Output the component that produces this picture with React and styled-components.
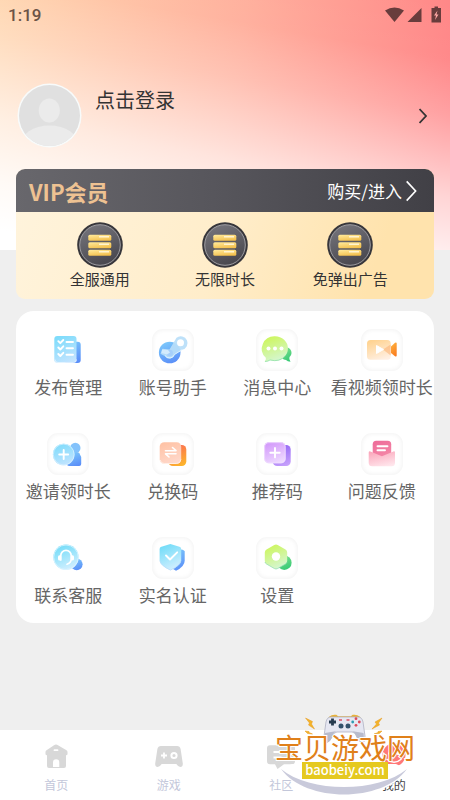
import React, { useState } from "react";
import styled, { createGlobalStyle } from "styled-components";

const GlobalStyle = createGlobalStyle`
  * {
    box-sizing: border-box;
  }

  body {
    margin: 0;
    font-family: "Noto Sans CJK SC", "Noto Sans", sans-serif;
    color: #333;
    background-color: #efefef;
  }

  button {
    padding: 0;
    border: none;
    background: none;
    font: inherit;
    color: inherit;
    cursor: pointer;
  }
`;

const Page = styled.div`
  display: flex;
  flex-direction: column;
  min-height: 100vh;
  background:
    linear-gradient(190deg, rgba(255, 255, 255, 0) 0%, rgba(255, 255, 255, 0.03) 18%, rgba(255, 255, 255, 0.24) 35%, rgba(255, 255, 255, 0.66) 60%, rgba(255, 255, 255, 0.9) 80%, #fff 94%),
    linear-gradient(100deg, #ffd4ac 0%, #ffaf9c 50%, #ff8486 95%);
  background-size: 100% 250px;
  background-repeat: no-repeat;
  background-color: #efefef;
`;

const StatusBar = styled.div`
  display: flex;
  align-items: center;
  justify-content: space-between;
  height: 30px;
  padding: 0 8px;
  font-family: Roboto, sans-serif;
  font-size: 17px;
  font-weight: 500;
  color: #6b5347;
`;

const StatusIcons = styled.svg`
  width: 57px;
  height: 18px;
  fill: #683c3c;
`;

const Profile = styled.button`
  display: flex;
  align-items: center;
  margin: 53px 23px 0 17px;
  text-align: left;
`;

const Avatar = styled.svg`
  width: 65px;
  height: 65px;
`;

const LoginText = styled.span`
  flex: 1;
  align-self: flex-start;
  margin-left: 13px;
  font-size: 20px;
  line-height: 34px;
`;

const Chevron = styled.svg`
  width: ${(props) => props.$size / 2}px;
  height: ${(props) => props.$size}px;
  fill: none;
  stroke: currentColor;
  stroke-width: ${(props) => (props.$size > 16 ? 1.2 : 1.8)};
`;

const VipCard = styled.section`
  margin: 21px 16px 0;
  border-radius: 9px;
  overflow: hidden;
  background: linear-gradient(110deg, #fff4dd 0%, #ffedca 50%, #ffe3ad 85%);
`;

const VipHeader = styled.div`
  display: flex;
  align-items: center;
  justify-content: space-between;
  height: 43px;
  padding: 0 17px 0 13px;
  background: linear-gradient(to right, #68676c, #56555b 50%, #414046);
`;

const VipTitle = styled.h2`
  margin: 0;
  font-size: 22px;
  font-weight: 700;
  color: #eec292;
`;

const BuyButton = styled.button`
  display: flex;
  align-items: center;
  gap: 4px;
  font-size: 17px;
  color: #fff;
`;

const Benefits = styled.div`
  display: grid;
  grid-template-columns: repeat(3, 1fr);
  height: 87px;
  padding: 10px 21px 0;
`;

const Benefit = styled.div`
  display: flex;
  flex-direction: column;
  align-items: center;
  font-size: 15px;
  line-height: 22px;
`;

const Medal = styled.svg`
  width: 46px;
  height: 46px;
`;

const MenuCard = styled.nav`
  display: grid;
  grid-template-columns: repeat(4, 1fr);
  margin: 12px 16px 16px;
  border-radius: 18px;
  background-color: #fff;
`;

const MenuItem = styled.button`
  display: flex;
  flex-direction: column;
  align-items: center;
  gap: 4px;
  height: 104px;
  padding-top: 18px;
  font-size: 17px;
  line-height: 24px;
  white-space: nowrap;
  color: #666;
`;

const IconTile = styled.span`
  display: block;
  height: 42px;
  border-radius: 11px;
  box-shadow: ${(props) =>
    props.$plain ? "none" : "inset 0 0 4px 1px #f3f3f3"};
`;

const TileSvg = styled.svg`
  display: block;
  width: 42px;
  height: 42px;
`;

const TabBar = styled.nav`
  position: relative;
  display: grid;
  grid-template-columns: repeat(4, 1fr);
  height: 70px;
  margin-top: auto;
  background-color: #fff;
`;

const Tab = styled.button`
  display: flex;
  flex-direction: column;
  align-items: center;
  gap: 6px;
  padding-top: 12px;
  font-size: 12px;
  line-height: 18px;
  color: ${(props) => (props.$active ? "#444" : "#c3c7da")};
`;

const TabSvg = styled.svg`
  width: 28px;
  height: 28px;
  color: ${(props) => (props.$active ? "#ff7878" : "#d8d8d8")};
  fill: currentColor;
`;

// 右下角站点标识,浮在底部导航之上
const SiteMark = styled.div`
  position: absolute;
  right: 30px;
  bottom: 0;
  width: 150px;
  height: 96px;
  padding-top: 29px;
  display: flex;
  flex-direction: column;
  align-items: center;
  pointer-events: none;
`;

const SiteArt = styled.svg`
  position: absolute;
  inset: 0;
  width: 100%;
  height: 100%;
`;

const SiteName = styled.div`
  position: relative;
  font-size: 28px;
  line-height: 28px;
  white-space: nowrap;
  color: #e0801a;
  -webkit-text-stroke: 2px #fff;
  paint-order: stroke fill;
`;

const SiteDomain = styled.div`
  position: relative;
  width: 86px;
  height: 17px;
  margin-top: 1px;
  text-align: center;
  font-size: 13px;
  font-weight: 500;
  line-height: 15px;
  color: #fff;
  background-color: #e5c91f;
`;

function Gradients() {
  const list = [
    ["sky", "#7fdcfb", "#c4e4ff"],
    ["blue", "#7cc8fb", "#5a8ef8"],
    ["cyan", "#72dcf8", "#d6f0ff"],
    ["lime", "#cdf65c", "#d5f6d8"],
    ["green", "#7fe08c", "#35c975"],
    ["peach", "#ffd391", "#fff0e4"],
    ["orange", "#ffb03b", "#f97b20"],
    ["coral", "#ffc3a6", "#ffd9cc"],
    ["fire", "#fb6a53", "#fdb52c"],
    ["lilac", "#d39afb", "#efdcff"],
    ["violet", "#8f62f5", "#c6a0fb"],
    ["rose", "#ee6d9a", "#f58aa8"],
    ["blush", "#fba9bd", "#ffe6ec"],
    ["gold", "#ffe795", "#f2bd48"],
    ["medal", "#74737a", "#46454c"],
  ];
  return (
    <svg width="0" height="0" style={{ position: "absolute" }} aria-hidden="true">
      <defs>
        {list.map(([id, from, to]) => (
          <linearGradient id={id} key={id} x1="0.3" y1="0" x2="0.7" y2="1">
            <stop offset="0" stopColor={from} />
            <stop offset="1" stopColor={to} />
          </linearGradient>
        ))}
      </defs>
    </svg>
  );
}

const white = {
  fill: "none",
  stroke: "#fff",
  strokeWidth: 1.9,
  strokeLinecap: "round",
  strokeLinejoin: "round",
};

const menuItems = [
  {
    label: "发布管理",
    plain: true,
    icon: (
      <>
        <rect x="17" y="12.7" width="16.7" height="21.3" rx="3" fill="url(#blue)" />
        <rect x="7.3" y="7" width="22.2" height="26.7" rx="3" fill="url(#sky)" />
        <path d="M8 30.500q0 3 3 3h15.500q3 0 3-3" fill="none" stroke="#e8f5ff" strokeWidth="0.8" />
        <path
          d="M11.300 12.200l2 2 3-3.200M11.300 18.500l2 2 3-3.200M11.300 25l2 2 3-3.200M19.500 13h6.500M19.500 19.300h6.500M19.500 25.700h6.500"
          {...white}
        />
      </>
    ),
  },
  {
    label: "账号助手",
    icon: (
      <>
        <circle cx="17.700" cy="23.500" r="10.800" fill="url(#blue)" />
        <path
          d="M24.500 8.800a6.800 6.800 0 1 1 5.500 12L22.500 25.500a5.300 5.300 0 0 1-9.500 1.800l-4.500-2.500 2-5 7 .8z"
          fill="#b9def9"
          opacity="0.92"
        />
        <path d="M13 26.500a5.300 5.300 0 0 0 9.500-1l7.500-4.700" fill="none" stroke="#e9f7ff" strokeWidth="0.900" />
        <circle cx="17.700" cy="24" r="3.200" fill="#a5cffb" />
        <path d="M10 20.500l6 .5 2 2.500-3 2-5.500-1.500z" fill="#d3ebfd" />
        <circle cx="28.500" cy="13.700" r="3.500" fill="#fff" />
      </>
    ),
  },
  {
    label: "消息中心",
    icon: (
      <>
        <path d="M24.500 24a5.500 5.500 0 1 1 9 4q-.8 2 1 4.800-3-.3-4.500-1.800-5-.5-5.500-7z" fill="url(#green)" />
        <path
          d="M19 7.300a12.700 12 0 0 1 0 24.400q-3 0-5-.7-2.500 1.500-5.500 1.500 2-2 1.300-3.800a12.700 12.400 0 0 1 9.200-21.400z"
          fill="url(#lime)"
        />
        <path d="M9 32.500q3 0 5-1.500 10 2.500 15.500-4.500" fill="none" stroke="#7fdc9b" strokeWidth="0.700" />
        <circle cx="12.500" cy="19.500" r="2" fill="#fff" />
        <circle cx="19" cy="19.500" r="2" fill="#fff" />
        <circle cx="25.500" cy="19.500" r="2" fill="#fff" />
      </>
    ),
  },
  {
    label: "看视频领时长",
    icon: (
      <>
        <path d="M30 17.500l4-3.700q1.700-.8 1.700.8v11.800q0 1.600-1.700.8l-4-3.200z" fill="url(#orange)" />
        <rect x="6" y="11" width="23.700" height="19.700" rx="3.500" fill="url(#peach)" />
        <path d="M22 20.500l7.700-5v11z" fill="#fbaa66" opacity="0.500" />
        <path d="M15.500 16.500l7 4-7 4z" fill="#fff" stroke="#fff" strokeLinejoin="round" />
      </>
    ),
  },
  {
    label: "邀请领时长",
    icon: (
      <>
        <circle cx="28.300" cy="15" r="5.200" fill="#83c2fb" />
        <path d="M21 19.500h10.500q1.200 0 1.200 1.500l1.500 3v7q0 2-2 2H22q-2 0-2-2z" fill="url(#blue)" />
        <circle cx="16.700" cy="21.500" r="10.800" fill="url(#sky)" />
        <circle cx="16.700" cy="21.500" r="10.400" fill="none" stroke="#d7f0ff" strokeWidth="0.800" />
        <path d="M16.700 17v9M12.200 21.500h9" {...white} />
      </>
    ),
  },
  {
    label: "兑换码",
    icon: (
      <>
        <rect x="16.300" y="12" width="18" height="21" rx="4.500" fill="url(#fire)" />
        <rect x="7.700" y="9.300" width="21.500" height="21.500" rx="4.500" fill="url(#coral)" />
        <path d="M8.200 27q.5 3.500 4 3.500h12.500q3.800 0 4.200-4" fill="none" stroke="#fff0ea" strokeWidth="0.900" />
        <path d="M13.500 17.700h10.500l-3.500-3.200M24 20.800H13.500l3.500 3.200" {...white} strokeWidth={1.600} />
      </>
    ),
  },
  {
    label: "推荐码",
    icon: (
      <>
        <rect x="16.700" y="12" width="18" height="21" rx="4.500" fill="url(#violet)" />
        <rect x="8.300" y="9.300" width="21.300" height="21" rx="4.500" fill="url(#lilac)" />
        <rect x="8.700" y="9.700" width="20.500" height="20.200" rx="4.200" fill="none" stroke="#f1e0ff" strokeWidth="0.700" />
        <path d="M19 15v9.400M14.300 19.700h9.400" {...white} />
      </>
    ),
  },
  {
    label: "问题反馈",
    icon: (
      <>
        <rect x="11.700" y="7.700" width="18.500" height="18" rx="3.500" fill="url(#rose)" />
        <path d="M7.700 19.500q0-1.500 1.700-1.100l11.500 4.800 11.500-4.800q1.600-.4 1.600 1.100v10.300q0 3.500-3.500 3.500H11.200q-3.500 0-3.500-3.500z" fill="url(#blush)" />
        <path d="M16.500 13.300h10M16.500 17.300h7.500" {...white} />
      </>
    ),
  },
  {
    label: "联系客服",
    plain: true,
    icon: (
      <>
        <circle cx="29.700" cy="27.300" r="5.900" fill="url(#blue)" />
        <circle cx="19" cy="20.300" r="12.700" fill="url(#cyan)" />
        <circle cx="19" cy="20.300" r="12.300" fill="none" stroke="#ddf4ff" strokeWidth="0.800" />
        <path d="M13.800 23v-4.500a5.200 5.200 0 0 1 10.400 0V22q0 4-4.200 5.200" {...white} strokeWidth={1.700} />
        <rect x="11" y="18.200" width="3.200" height="5.300" rx="1.500" fill="#fff" />
        <rect x="23.800" y="18.200" width="3.200" height="5.300" rx="1.500" fill="#fff" />
      </>
    ),
  },
  {
    label: "实名认证",
    icon: (
      <>
        <path d="M22 14l8-1.500q2.700 1 2.700 2v9q0 6-8.700 10.300l-5-3z" fill="url(#blue)" />
        <path d="M18.400 7l9 2.700q1.800.6 1.800 2.300v11q0 5.500-10.800 10.300Q7.600 28.500 7.600 23V12q0-1.700 1.800-2.300z" fill="url(#cyan)" />
        <path d="M7.800 23.500q.8 5 10.600 9.600 9.800-4.500 10.600-9.600" fill="none" stroke="#b9ddfa" strokeWidth="0.800" />
        <path d="M14 18.500l4 4 7.200-7.200" {...white} />
      </>
    ),
  },
  {
    label: "设置",
    icon: (
      <>
        <circle cx="28.300" cy="25.700" r="7.300" fill="url(#green)" />
        <path
          d="M18.300 8q1.700-1 3.400 0l7.800 4.500q1.700 1 1.700 3v8.400q0 2-1.700 3l-7.800 4.500q-1.700 1-3.400 0l-7.800-4.500q-1.700-1-1.700-3v-8.400q0-2 1.700-3z"
          fill="url(#lime)"
        />
        <path d="M9 25q.3 1.400 1.500 2l7.800 4.500q1.700 1 3.400 0l7.800-4.500q1.200-.8 1.500-2" fill="none" stroke="#8edbb0" strokeWidth="0.700" />
        <circle cx="20" cy="19.500" r="4.200" fill="#fff" />
      </>
    ),
  },
];

const tabs = [
  {
    label: "首页",
    icon: (
      <path
        fillRule="evenodd"
        d="M14 2.600q1 0 2 .6l8.500 5q1 .7 1 1.800v2q0 1.200-1.500 1.200V24q0 2-2 2H7q-2 0-2-2V13.200q-1.500 0-1.500-1.200v-2q0-1.100 1-1.800l7.500-5q1-.6 2-.6zM12.500 7.300a.9.9 0 0 0 0 1.800h3a.9.9 0 0 0 0-1.800zM11 25h6.300v-4.500a3.150 3.150 0 0 0-6.300 0z"
      />
    ),
  },
  {
    label: "游戏",
    icon: (
      <>
        <path d="M6 4h16q3 0 3.600 3l2.200 14.500q.2 3.500-2.500 3.500-2 0-4-3H6.700q-2 3-4 3Q0 25 .2 21.500L2.400 7Q3 4 6 4z" />
        <path d="M9 10.500v6M6 13.500h6" stroke="#fff" strokeWidth="1.800" />
        <circle cx="19" cy="13.500" r="2.600" fill="none" stroke="#fff" strokeWidth="2" />
      </>
    ),
  },
  {
    label: "社区",
    icon: (
      <>
        <path d="M3 3.300h22q3 0 3 3v13q0 3-3 3h-8L10.500 27 8 22.300H3q-3 0-3-3v-13q0-3 3-3z" />
        <path d="M6.500 10h13M6.500 15.500h8" stroke="#fff" strokeWidth="2" />
      </>
    ),
  },
  {
    label: "我的",
    icon: (
      <>
        <path d="M8 26q0-3 6-3t6 3z" />
        <circle cx="14" cy="12.800" r="11.500" />
        <path d="M6.500 17q7.500 6.500 15 0" fill="none" stroke="#fff" strokeWidth="1.500" />
        <circle cx="10" cy="11.500" r="1.800" fill="#fff" />
        <circle cx="18.500" cy="11.500" r="1.800" fill="#fff" />
      </>
    ),
  },
];

function MedalIcon() {
  return (
    <Medal viewBox="0 0 46 46" aria-hidden="true">
      <circle cx="23" cy="23" r="22.800" fill="#37363b" />
      <circle cx="23" cy="23" r="20.300" fill="url(#medal)" stroke="#a9a8ad" strokeWidth="0.900" />
      {[12.8, 20.3, 27.8].map((y) => (
        <g key={y}>
          <rect x="11.300" y={y} width="23" height="6" rx="1.500" fill="url(#gold)" />
          <path d={`M22 ${y + 2}h10`} stroke="#fff4cf" strokeWidth="1.400" />
        </g>
      ))}
    </Medal>
  );
}

function SiteLogo() {
  return (
    <SiteMark>
      <SiteArt viewBox="270 704 150 96" aria-hidden="true">
        <path d="M281 769Q296 795 344 795T407 769L396 764H292z" fill="#fff" />
        <path d="M281 769C306 803 382 803 407 769C378 793 310 793 281 769z" fill="#c9cadb" />
        <path d="M330 717q2-2 6-1.500l2 1.500h13l2-1.500q4-.5 6 1.500z" fill="#e8b23a" stroke="#e8b23a" strokeWidth="1.500" />
        <path
          d="M331 717h27q4 0 5 5l2 14q.5 5-2 7-4-1-6-6-1.500-5-5-5h-15q-3.500 0-5 5-2 5-6 6-2.500-2-2-7l2-14q1-5 5-5z"
          fill="#e6e7f2"
          stroke="#aeb1c3"
          strokeWidth="0.800"
        />
        <path d="M325 733q-1 7 1 10 4-1 6-6 1.500-5 5-6M363.500 733q1 7-1 10-4-1-6-6-1.500-5-5-6" fill="#b8bbcc" />
        <path d="M332.500 718.500v7M329 722h7" stroke="#263a4f" strokeWidth="2.800" />
        <circle cx="341" cy="726" r="2.500" fill="#33516b" />
        <circle cx="348" cy="726" r="2.500" fill="#33516b" />
        <path d="M339 720h3M346.500 720h3" stroke="#db5265" strokeWidth="1.300" />
        <circle cx="356" cy="718.700" r="1.400" fill="#db4a5b" />
        <circle cx="356" cy="725.300" r="1.400" fill="#db4a5b" />
        <circle cx="352.700" cy="722" r="1.400" fill="#2e9bb2" />
        <circle cx="359.300" cy="722" r="1.400" fill="#db4a5b" />
        <g fill="#f3b329" stroke="#e79a20" strokeWidth="0.500">
          <path d="M305.500 718l7 3.500-1 2.500 3 5-6-4 1-2z" />
          <path d="M382 718l-7 4 1.500 2-4.500 5 7.500-4-1-2z" />
          <path d="M305 731l4 .5v1l3.500 1.500-5-.5z" />
          <path d="M382 731l-4 .5v1l-4 1.500 5.500-.5z" />
        </g>
      </SiteArt>
      <SiteName>宝贝游戏网</SiteName>
      <SiteDomain>baobeiy.com</SiteDomain>
    </SiteMark>
  );
}

function MinePage() {
  const [activeTab, setActiveTab] = useState("我的");

  return (
    <Page>
      <GlobalStyle />
      <Gradients />
      <StatusBar>
        <span>1:19</span>
        <StatusIcons viewBox="0 0 57 18" aria-hidden="true">
          <path d="M0 4.500Q9.500-1.500 19 4.500L9.500 16z" />
          <path d="M36.500 2v14H22.500z" />
          <path d="M46.500 2h3V.500h3.500V2h3v14.500h-9.500z" />
          <path d="M52.500 4.500l-3.500 5h2l-1 4.500 3.500-5.500h-2z" fill="#ffa8a5" />
        </StatusIcons>
      </StatusBar>

      <Profile>
        <Avatar viewBox="0 0 65 65" aria-hidden="true">
          <clipPath id="face">
            <circle cx="32.500" cy="32.500" r="30.500" />
          </clipPath>
          <circle cx="32.500" cy="32.500" r="32" fill="#f8fbfb" />
          <g clipPath="url(#face)">
            <rect width="65" height="65" fill="#e0e0e0" />
            <ellipse cx="32.300" cy="27.500" rx="10.500" ry="12" fill="#ebebeb" />
            <ellipse cx="32.500" cy="62" rx="29" ry="19.500" fill="#ebebeb" />
          </g>
        </Avatar>
        <LoginText>点击登录</LoginText>
        <Chevron $size={16} viewBox="0 0 8 16" aria-hidden="true">
          <path d="M.5 1L7 8l-6.500 7" />
        </Chevron>
      </Profile>

      <VipCard>
        <VipHeader>
          <VipTitle>VIP会员</VipTitle>
          <BuyButton>
            购买/进入
            <Chevron $size={22} viewBox="0 0 8 16" aria-hidden="true">
              <path d="M.5 1L7 8l-6.500 7" />
            </Chevron>
          </BuyButton>
        </VipHeader>
        <Benefits>
          {["全服通用", "无限时长", "免弹出广告"].map((name) => (
            <Benefit key={name}>
              <MedalIcon />
              {name}
            </Benefit>
          ))}
        </Benefits>
      </VipCard>

      <MenuCard>
        {menuItems.map((item) => (
          <MenuItem key={item.label}>
            <IconTile $plain={item.plain}>
              <TileSvg viewBox="0 0 42 42" aria-hidden="true">
                {item.icon}
              </TileSvg>
            </IconTile>
            {item.label}
          </MenuItem>
        ))}
      </MenuCard>

      <TabBar>
        {tabs.map((tab) => (
          <Tab
            key={tab.label}
            $active={activeTab === tab.label}
            onClick={() => setActiveTab(tab.label)}
          >
            <TabSvg $active={activeTab === tab.label} viewBox="0 0 28 28" aria-hidden="true">
              {tab.icon}
            </TabSvg>
            {tab.label}
          </Tab>
        ))}
        <SiteLogo />
      </TabBar>
    </Page>
  );
}

export default MinePage;
